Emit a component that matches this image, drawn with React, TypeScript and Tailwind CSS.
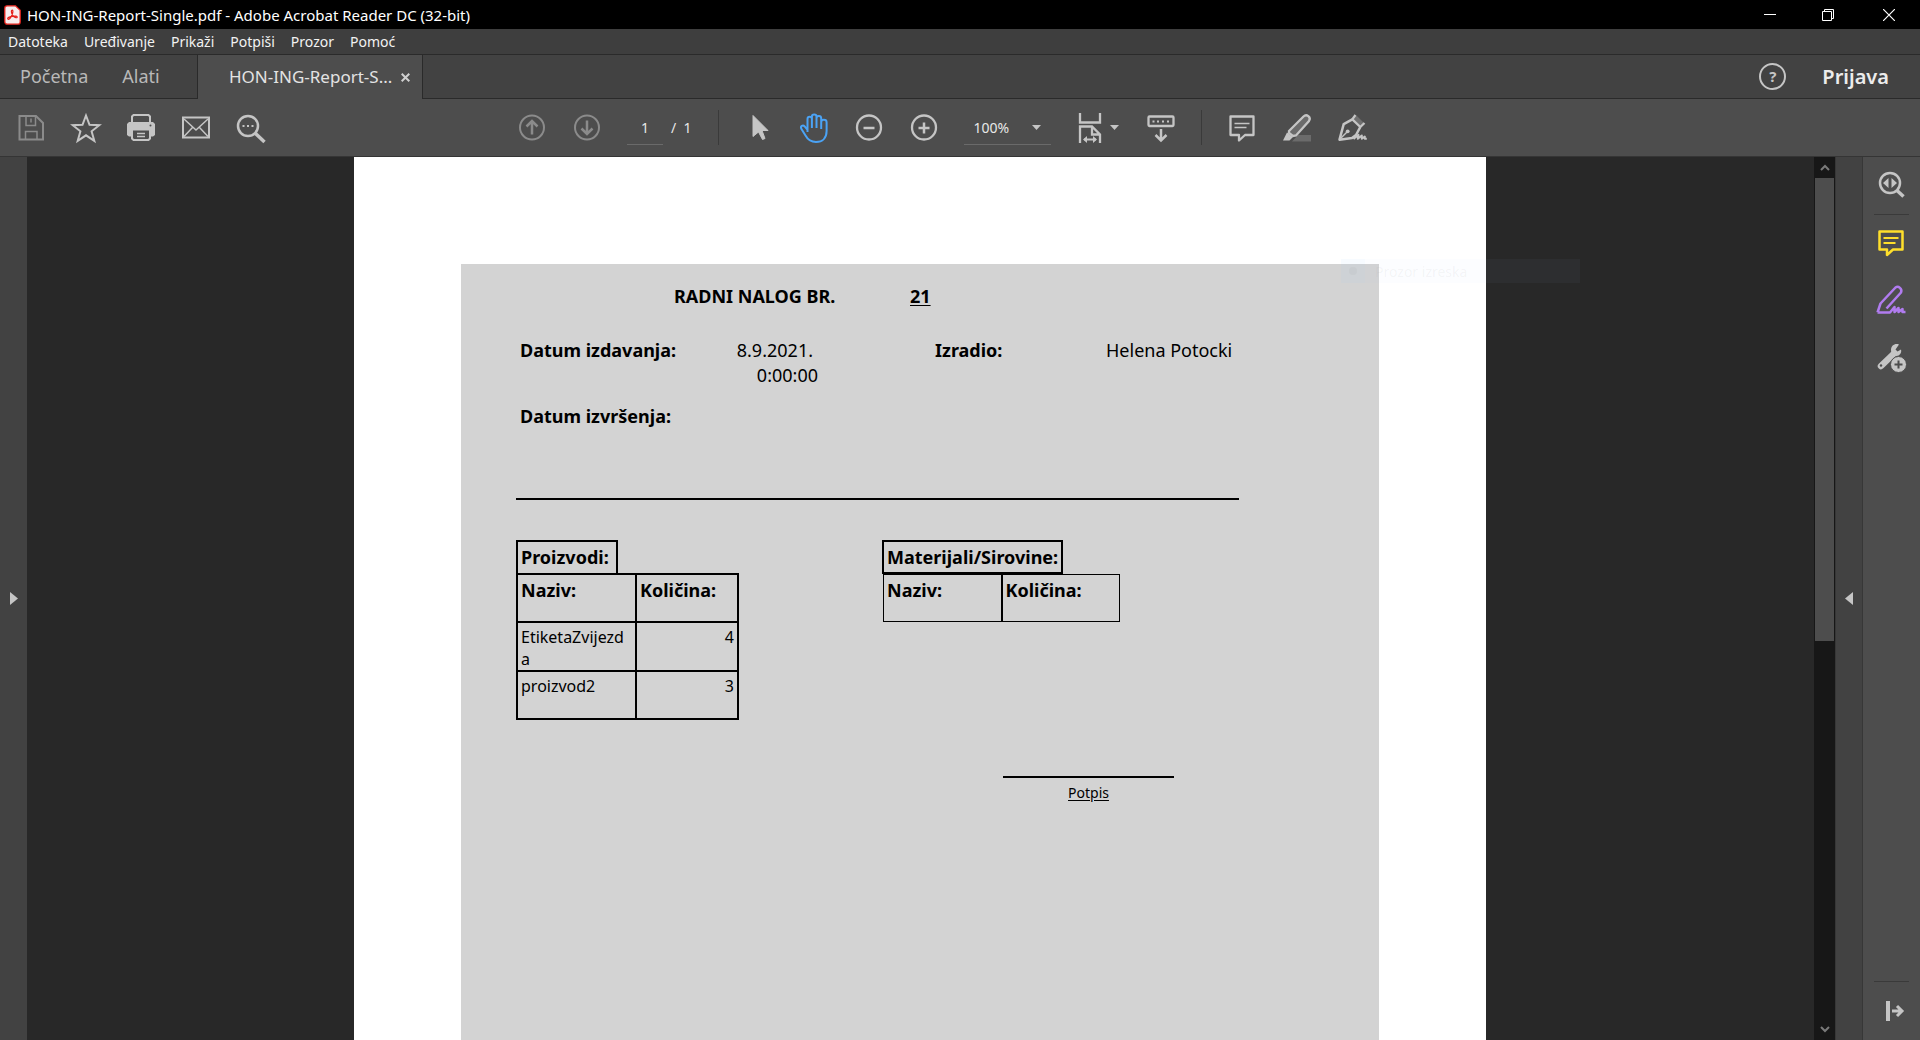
import type { ReactNode } from "react";

function Icon({ label, className = "", tone = "text-[#c5c5c5]", children }: { label: string; className?: string; tone?: string; children: ReactNode }) {
  return (
    <button type="button" aria-label={label} className={`shrink-0 ${tone} ${className}`}>
      <svg width="32" height="32" viewBox="0 0 32 32" fill="none" stroke="currentColor" strokeWidth="2" aria-hidden="true">
        {children}
      </svg>
    </button>
  );
}

function TitleBar() {
  return (
    <header className="flex h-[29px] shrink-0 items-center bg-black pl-1 text-white">
      <svg width="17" height="20" viewBox="0 0 17 20" aria-hidden="true">
        <path d="M3 .8h8.500l4.700 4.500V17a2.200 2.200 0 0 1-2.200 2.200H3A2.200 2.200 0 0 1 .8 17V3A2.200 2.200 0 0 1 3 .8Z" fill="#f7eeee" stroke="#e5231b" strokeWidth="1.300" />
        <path d="M3.700 13.500c0-1.600 5.600-2.600 8.300-2.300 1.900.3 1.500 1.900-.1 1.500-2.100-.6-4.800-3.600-4.500-6.400.1-1.600 1.600-1.400 1.500.3-.2 2.700-2.600 7.500-4.300 7.800-.5.100-.9-.4-.9-.9Z" fill="none" stroke="#e5231b" strokeWidth="1.200" />
      </svg>
      <h1 className="ml-[6px] text-[15px] leading-[20px]">HON-ING-Report-Single.pdf - Adobe Acrobat Reader DC (32-bit)</h1>
      <div className="ml-auto flex h-full">
        <button type="button" aria-label="Minimize" className="flex w-[58px] items-center justify-center">
          <svg width="12" height="12" stroke="white"><path d="M0 5.500h12" /></svg>
        </button>
        <button type="button" aria-label="Restore" className="flex w-[58px] items-center justify-center">
          <svg width="12" height="12" stroke="white" fill="none"><path d="M.5 2.500h9v9h-9zM2.500 2.500v-2h9v9h-2" /></svg>
        </button>
        <button type="button" aria-label="Close" className="flex w-[63px] items-center justify-center">
          <svg width="12" height="12" stroke="white" strokeWidth="1.200"><path d="M0 0l12 12M12 0L0 12" /></svg>
        </button>
      </div>
    </header>
  );
}

const menus = ["Datoteka", "Uređivanje", "Prikaži", "Potpiši", "Prozor", "Pomoć"];

function MenuBar() {
  return (
    <nav className="flex h-[26px] shrink-0 items-center gap-4 border-b border-[#2a2a2a] bg-[#3e3e3e] pl-2 text-[14px] leading-[20px] text-[#f2f2f2]">
      {menus.map((m) => (
        <button type="button" key={m}>{m}</button>
      ))}
    </nav>
  );
}

function TabBar() {
  return (
    <div className="flex h-[44px] shrink-0 bg-[#424242] text-[#b9b9b9]">
      <div className="flex w-[198px] items-center gap-[34px] border-r border-b border-[#2a2a2a] pl-5 text-[18px]">
        <button type="button">Početna</button>
        <button type="button">Alati</button>
      </div>
      <div className="flex w-[224px] items-center bg-[#4d4d4d] pl-[31px] text-[#e3e3e3]">
        <button type="button" className="text-[17px]">HON-ING-Report-S...</button>
        <button type="button" aria-label="Close tab" className="mr-3 ml-auto">
          <svg width="9" height="9" stroke="#d0d0d0" strokeWidth="2"><path d="M.7.7l7.600 7.600M8.300.7L.7 8.300" /></svg>
        </button>
      </div>
      <div className="flex flex-1 items-center justify-end gap-9 border-b border-l border-[#2a2a2a] pr-[31px]">
        <button type="button" aria-label="Help" className="flex size-[27px] items-center justify-center rounded-full border-2 border-[#c5c5c5] text-[15px] font-bold text-[#c5c5c5]">?</button>
        <button type="button" className="text-[20px] font-semibold text-[#ececec]">Prijava</button>
      </div>
    </div>
  );
}

function Toolbar() {
  return (
    <div className="flex h-[58px] shrink-0 items-center border-b border-[#353535] bg-[#4d4d4d] text-[#e8e8e8]">
      <div className="flex gap-[23px] pl-[15px]">
        <Icon label="Save" tone="text-[#8b8b8b]">
          <path d="M4.500 4h16.500l7 7v16.500h-23.500z" />
          <path d="M11 4v9.500h9.500V4M16 6.500v4M10.500 27.500v-8h11.500v8" strokeWidth="1.500" />
        </Icon>
        <Icon label="Star">
          <path d="M16 3.500l3.500 9.300 9.800.4-7.700 6.100 2.700 9.500L16 23.300l-8.300 5.500 2.700-9.500-7.700-6.100 9.800-.4z" />
        </Icon>
        <Icon label="Print">
          <path d="M7 11V4.500l1.500-1.500h15L25 4.500V11" />
          <path d="M4 10h24l2 2v11l-2 1.500H4L2 23V12z" fill="currentColor" stroke="none" />
          <path d="M7 17.500h18v9l-1.500 1.500h-15L7 26.500z" fill="#4d4d4d" />
          <path d="M12 21.500h8M12 24.500h8" strokeWidth="1.500" />
          <circle cx="25.500" cy="13.500" r="1" fill="#4d4d4d" stroke="none" />
        </Icon>
        <Icon label="Mail">
          <rect x="3" y="5.500" width="26" height="20" />
          <path d="M4 7l12 11L28 7M4 24.500l8.500-9M28 24.500l-8.500-9" strokeWidth="1.500" />
        </Icon>
        <Icon label="Find">
          <circle cx="13" cy="14" r="10" strokeWidth="2.500" />
          <path d="M20.500 21.500l9 8.500" strokeWidth="3.500" />
          <path d="M7.500 14h2M12 14h2M16.500 14h2" strokeWidth="2.200" />
        </Icon>
      </div>

      <div className="ml-[249px] flex items-center">
        <div className="flex gap-[23px]">
          <Icon label="Previous page" tone="text-[#8b8b8b]">
            <circle cx="16" cy="15.500" r="12" />
            <path d="M16 22.500V9.500M10.500 14.500l5.500-5.500 5.500 5.500" strokeWidth="2.500" />
          </Icon>
          <Icon label="Next page" tone="text-[#8b8b8b]">
            <circle cx="16" cy="15.500" r="12" />
            <path d="M16 8.500v13M10.500 16.500l5.500 5.500 5.500-5.500" strokeWidth="2.500" />
          </Icon>
        </div>
        <input aria-label="Page number" defaultValue="1" className="ml-6 h-[35px] w-9 border-b border-[#6a6a6a] bg-transparent text-center text-[14px] outline-none" />
        <span className="ml-2 text-[14px] whitespace-pre">/  1</span>
      </div>

      <div className="ml-[26px] h-[35px] w-px bg-[#3a3a3a]" />

      <div className="ml-6 flex gap-[23px]">
        <Icon label="Select">
          <path d="M10 3.500v21l5.500-4.500 4 7.500 2.500-1-3-8h6z" fill="currentColor" strokeWidth="1" strokeLinejoin="round" />
        </Icon>
        <Icon label="Hand" tone="text-[#4ba3f5]">
          <path d="M9.500 20V7a2.200 2.200 0 0 1 4.400 0v9M13.900 8V4.800a2.300 2.300 0 0 1 4.600 0V16M18.500 6.300a2.200 2.200 0 0 1 4.700 0V17M23.200 10.200c0-3.200 5.400-3.200 5.400 0V19c0 7-4.100 11-10.600 11-5 0-8.300-2.500-10.500-6.500L3.300 16.800c-1.200-2.600 1.500-4.300 3.400-2.300L9.500 18" />
        </Icon>
        <Icon label="Zoom out">
          <circle cx="16" cy="15.500" r="12" strokeWidth="2.300" />
          <path d="M10.500 16h11" strokeWidth="2.500" />
        </Icon>
        <Icon label="Zoom in">
          <circle cx="16" cy="15.500" r="12" strokeWidth="2.300" />
          <path d="M10.500 16h11M16 10.500v11" strokeWidth="2.500" />
        </Icon>
      </div>

      <div className="relative ml-6 flex h-[35px] w-[87px] items-center border-b border-[#6a6a6a]">
        <select aria-label="Zoom level" className="h-full w-full appearance-none bg-transparent pl-[10px] text-[14px] outline-none">
          <option>100%</option>
        </select>
        <svg width="9" height="5" className="pointer-events-none absolute right-[10px]" aria-hidden="true"><path d="M0 0h9L4.500 5z" fill="#c5c5c5" /></svg>
      </div>

      <div className="ml-[23px] flex items-center">
        <Icon label="Fit width">
          <path d="M6 1v9.500h20V1" strokeWidth="2.300" />
          <path d="M6 31V14.500h12l8 8V31M18 15v7.500h8" strokeWidth="2.300" />
          <path d="M10 27.500h12" />
          <path d="M9 27.500l4-3.500v7zM23 27.500l-4-3.500v7z" fill="currentColor" stroke="none" />
        </Icon>
        <button type="button" aria-label="Fit options" className="ml-1">
          <svg width="9" height="5"><path d="M0 0h9L4.500 5z" fill="#c5c5c5" /></svg>
        </button>
      </div>
      <div className="ml-[26px] flex">
        <Icon label="Page scrolling">
          <rect x="3.500" y="4.500" width="25" height="9.500" rx="1" strokeWidth="2.300" />
          <path d="M7.500 9.500h2M12 9.500h2M17 9.500h2M22 9.500h2" />
          <path d="M16 17v11M10.500 23l5.500 5.500 5.500-5.500" strokeWidth="2.500" />
        </Icon>
      </div>

      <div className="ml-6 h-[35px] w-px bg-[#3a3a3a]" />

      <div className="ml-6 flex gap-[23px]">
        <Icon label="Comment">
          <path d="M4.500 4.500h23v18.500h-8.500l-6 5.500v-5.500h-8.500z" strokeWidth="2.300" strokeLinejoin="round" />
          <path d="M8.500 11.500h15M8.500 15.500h12" strokeWidth="1.500" />
        </Icon>
        <Icon label="Highlight">
          <path d="M17 23h13v6.500H11z" fill="#6b6b6b" stroke="none" />
          <path d="M8 19L22.500 4.500c3-3 8 .5 5.500 4.500L15 23.500l-3 .5-4-3z" fill="#6b6b6b" strokeWidth="2.300" />
          <path d="M6 20.500l6 4.500-3.500 3.500H2z" fill="currentColor" stroke="none" />
        </Icon>
        <Icon label="Sign">
          <path d="M20.500 3.500l7.500 7.500-4 4L17 7.500z" fill="#6f6f6f" stroke="none" />
          <path d="M19.500 3L16.300 7.300l8 7.700L28.500 11" strokeWidth="2.300" />
          <path d="M16.300 7.300L7.700 12.200 3.500 27.700 16 26l4-3 4.300-8" strokeWidth="2.500" strokeLinejoin="round" />
          <path d="M4 27l7-7" strokeWidth="1.500" />
          <path d="M17.500 27l5-4.200-.7 4 4-3.300v3.300l3-2.300v2.300h2" strokeLinejoin="round" />
          <circle cx="11.700" cy="19.300" r="1.900" fill="currentColor" stroke="none" />
        </Icon>
      </div>
    </div>
  );
}

const products = [
  { name: "EtiketaZvijezda", amount: 4 },
  { name: "proizvod2", amount: 3 },
];

function Report() {
  return (
    <article className="ml-[107px] min-h-full w-[918px] bg-[#d3d3d3] pt-5 pl-[55px] text-[18px] leading-[25px] text-black">
      <div className="flex h-6 items-center font-bold">
        <h2 className="ml-[158px] w-[236px]">RADNI NALOG BR.</h2>
        <span className="underline underline-offset-2">21</span>
      </div>

      <dl className="mt-[30px] grid grid-cols-[160px_138px_117px_171px_1fr] pl-1">
        <dt className="font-bold">Datum izdavanja:</dt>
        <dd className="text-right"><span className="mr-[5px]">8.9.2021.</span><br />0:00:00</dd>
        <dt className="col-start-4 font-bold">Izradio:</dt>
        <dd>Helena Potocki</dd>
        <dt className="col-span-2 mt-4 font-bold">Datum izvršenja:</dt>
      </dl>

      <hr className="mt-[69px] w-[723px] border-t-2 border-black" />

      <div className="mt-10 flex items-start">
        <section className="w-[366px]">
          <h3 className="h-[33px] w-[102px] border-2 border-b-0 border-black pt-[3px] pl-[3px] font-bold whitespace-nowrap">Proizvodi:</h3>
          <table className="w-[223px] table-fixed border-collapse border-2 border-black">
            <colgroup><col className="w-[119px]" /><col /></colgroup>
            <thead>
              <tr className="h-12 text-left align-top">
                <th className="border-2 border-black px-[3px] pt-[3px] font-bold">Naziv:</th>
                <th className="border-2 border-black px-[3px] pt-[3px] font-bold">Količina:</th>
              </tr>
            </thead>
            <tbody className="text-[16px] leading-[22px]">
              {products.map((p) => (
                <tr key={p.name} className="h-12 align-top">
                  <td className="border-2 border-black px-[3px] pt-[3px] pb-0 break-all">{p.name}</td>
                  <td className="border-2 border-black px-[3px] pt-[3px] pb-0 text-right">{p.amount}</td>
                </tr>
              ))}
            </tbody>
          </table>
        </section>
        <section>
          <h3 className="h-[34px] w-[181px] border-2 border-black pt-[3px] pl-[3px] font-bold whitespace-nowrap">Materijali/Sirovine:</h3>
          <table className="ml-px w-[237px] table-fixed border-collapse border border-black">
            <thead>
              <tr className="h-[47px] text-left align-top">
                <th className="border border-r-2 border-black px-[3px] pt-[3px] font-bold">Naziv:</th>
                <th className="border border-black px-[3px] pt-[3px] font-bold">Količina:</th>
              </tr>
            </thead>
          </table>
        </section>
      </div>

      <p className="mt-14 ml-[487px] w-[171px] border-t-2 border-black pt-1 text-center text-[14px] leading-[22px] underline underline-offset-2">Potpis</p>
    </article>
  );
}

function SnipGhost() {
  return (
    <div className="absolute top-[102px] left-[987px] flex h-6 w-[239px] items-center bg-[#b4d2ff]/4 text-[14px] text-[#888888]/8">
      <span className="flex h-6 w-6 items-center justify-center bg-[#a0e0ff]/5"><span className="size-2 rounded-full bg-[#888888]/8" /></span>
      <span className="ml-[10px]">Prozor izreska</span>
    </div>
  );
}

function ScrollBar() {
  return (
    <div className="flex w-[21px] shrink-0 flex-col bg-[#171717] px-px">
      <button type="button" aria-label="Scroll up" className="flex h-[21px] shrink-0 items-center justify-center">
        <svg width="10" height="7" fill="none" stroke="#7a7a7a" strokeWidth="2"><path d="M1 6l4-4 4 4" /></svg>
      </button>
      <div className="flex-1"><div className="h-[55%] bg-[#4d4d4d]" /></div>
      <button type="button" aria-label="Scroll down" className="flex h-[21px] shrink-0 items-center justify-center">
        <svg width="10" height="7" fill="none" stroke="#7a7a7a" strokeWidth="2"><path d="M1 1l4 4 4-4" /></svg>
      </button>
    </div>
  );
}

function ToolsPane() {
  return (
    <aside className="flex w-[57px] shrink-0 flex-col items-center bg-[#4d4d4d] pt-3 pr-px">
      <Icon label="Search tools">
        <circle cx="15" cy="14" r="10" strokeWidth="2.500" />
        <path d="M22 21.500l6.500 6" strokeWidth="3.500" />
        <path d="M13.500 9v10l-5.500-5zM16.500 9v10l5.500-5z" fill="currentColor" stroke="none" />
      </Icon>
      <div className="mt-[13px] h-px w-[35px] bg-[#3a3a3a]" />
      <Icon label="Add comments" tone="text-[#ffdf2b]" className="mt-3">
        <path d="M4.500 4.500h23v18h-9.500l-6 5.500v-5.500h-7.500z" strokeWidth="2.500" strokeLinejoin="round" />
        <path d="M8.500 11h15M8.500 16h12" />
      </Icon>
      <Icon label="Fill and sign" tone="text-[#b17cf0]" className="mt-[25px]">
        <path d="M2.500 28.500l3-9L20.500 3.500c3-2 7 1.500 5.500 5L11.500 24.500M2.500 28.500H15l4.500-5.500v5l4-4v4l4-3v3h3" strokeWidth="2.500" strokeLinejoin="round" />
      </Icon>
      <Icon label="More tools" className="mt-[25px]">
        <path d="M6 25L18 13.500" strokeWidth="6.500" strokeLinecap="round" />
        <path d="M24 3.500c-4-1.500-8 1-8 5.500 0 3.500 2.500 6 5.500 6 3 0 5.500-3 4.500-6.500l-3.500 2-2-2z" fill="currentColor" stroke="none" />
        <circle cx="6" cy="24.500" r="1.200" fill="#4d4d4d" stroke="none" />
        <circle cx="23.500" cy="23.500" r="8" fill="currentColor" stroke="#4d4d4d" strokeWidth="1" />
        <path d="M19.500 23.500h8M23.500 19.500v8" stroke="#4d4d4d" />
      </Icon>
      <div className="mt-auto h-px w-[35px] bg-[#3a3a3a]" />
      <Icon label="Collapse pane" className="my-[13px]">
        <path d="M13 6v20" strokeWidth="4" />
        <path d="M17 16h10M22 11l5 5-5 5" strokeWidth="3" />
      </Icon>
    </aside>
  );
}

export default function App() {
  return (
    <div className="flex h-screen flex-col overflow-hidden bg-[#282828] font-['Noto_Sans',sans-serif]">
      <TitleBar />
      <MenuBar />
      <TabBar />
      <Toolbar />
      <div className="flex min-h-0 flex-1">
        <button type="button" aria-label="Open navigation pane" className="flex w-[27px] shrink-0 items-center justify-center bg-[#424242]">
          <svg width="8" height="13"><path d="M0 0v13l8-6.500z" fill="#c5c5c5" /></svg>
        </button>
        <main className="min-w-0 flex-1 overflow-hidden pr-px">
          <div className="relative mx-auto h-full w-[1132px] bg-white pt-[107px]">
            <Report />
            <SnipGhost />
          </div>
        </main>
        <ScrollBar />
        <button type="button" aria-label="Close tools pane" className="flex w-7 shrink-0 items-center justify-center border-x border-[#373737] bg-[#424242]">
          <svg width="8" height="13"><path d="M8 0v13L0 6.500z" fill="#c5c5c5" /></svg>
        </button>
        <ToolsPane />
      </div>
    </div>
  );
}
